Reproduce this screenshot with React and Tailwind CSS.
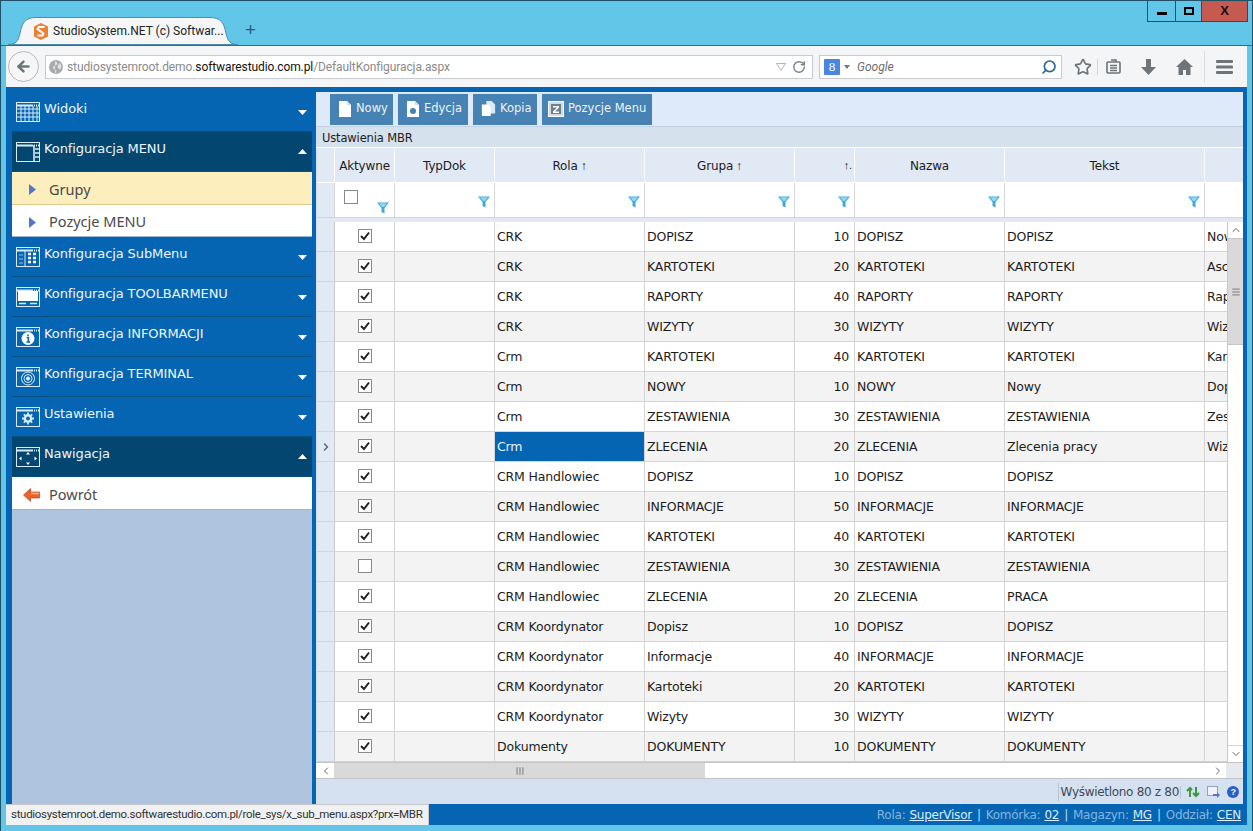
import {
  ArrowLeft,
  ChevronDown,
  ChevronLeft,
  ChevronRight,
  ChevronUp,
  Menu,
  RotateCw,
  Search,
  Star,
} from "lucide-react";

const UI_FONT = "font-['Roboto','Noto_Sans',sans-serif]";
const GRID_COLS = "grid grid-cols-[18px_60px_100px_150px_150px_60px_150px_200px_1fr]";

const rows = [
  [true, "CRK", "DOPISZ", 10, "DOPISZ", "DOPISZ", "Nowy"],
  [true, "CRK", "KARTOTEKI", 20, "KARTOTEKI", "KARTOTEKI", "Asc"],
  [true, "CRK", "RAPORTY", 40, "RAPORTY", "RAPORTY", "Raporty"],
  [true, "CRK", "WIZYTY", 30, "WIZYTY", "WIZYTY", "Wizyty"],
  [true, "Crm", "KARTOTEKI", 40, "KARTOTEKI", "KARTOTEKI", "Kartoteki"],
  [true, "Crm", "NOWY", 10, "NOWY", "Nowy", "Dopisz"],
  [true, "Crm", "ZESTAWIENIA", 30, "ZESTAWIENIA", "ZESTAWIENIA", "Zestawienia"],
  [true, "Crm", "ZLECENIA", 20, "ZLECENIA", "Zlecenia pracy", "Wizyty"],
  [true, "CRM Handlowiec", "DOPISZ", 10, "DOPISZ", "DOPISZ", ""],
  [true, "CRM Handlowiec", "INFORMACJE", 50, "INFORMACJE", "INFORMACJE", ""],
  [true, "CRM Handlowiec", "KARTOTEKI", 40, "KARTOTEKI", "KARTOTEKI", ""],
  [false, "CRM Handlowiec", "ZESTAWIENIA", 30, "ZESTAWIENIA", "ZESTAWIENIA", ""],
  [true, "CRM Handlowiec", "ZLECENIA", 20, "ZLECENIA", "PRACA", ""],
  [true, "CRM Koordynator", "Dopisz", 10, "DOPISZ", "DOPISZ", ""],
  [true, "CRM Koordynator", "Informacje", 40, "INFORMACJE", "INFORMACJE", ""],
  [true, "CRM Koordynator", "Kartoteki", 20, "KARTOTEKI", "KARTOTEKI", ""],
  [true, "CRM Koordynator", "Wizyty", 30, "WIZYTY", "WIZYTY", ""],
  [true, "Dokumenty", "DOKUMENTY", 10, "DOKUMENTY", "DOKUMENTY", ""],
];

function WinIcon({ children }) {
  return (
    <svg width="24" height="20" viewBox="0 0 24 20" className="shrink-0" fill="none" stroke="#d8ecf8">
      <rect x="0.5" y="0.5" width="23" height="19" />
      <path d="M1 3.5h22" strokeWidth="2" strokeDasharray="16 1 1 1 1 1 1" />
      {children}
    </svg>
  );
}

const menuIcons = {
  grid: (
    <path d="M1 7h22M1 11h22M1 15h22M5 4v15M9 4v15M13 4v15M17 4v15M21 4v15" strokeWidth="1" />
  ),
  menu: (
    <path d="M18 3v16M19 7h4M19 11h4M19 15h4" strokeWidth="1.6" />
  ),
  sub: (
    <g>
      <path d="M9 3v16" />
      <path d="M3 8h4M3 12h4M3 16h4" stroke="#8fbfe0" />
      <path d="M12 7h3M17 7h3M12 11h3M17 11h3M12 15h3M17 15h3" strokeWidth="2.4" stroke="#fff" />
    </g>
  ),
  toolbar: (
    <g>
      <rect x="2" y="4" width="20" height="10" fill="#fff" stroke="none" />
      <path d="M3 16.5h7M14 16.5h7" strokeWidth="1.6" />
    </g>
  ),
  info: (
    <g>
      <circle cx="12" cy="11.5" r="6.5" fill="#fff" stroke="none" />
      <path d="M12 7.5v1.6M10.6 10.5H12.4V15M10.5 15h3.6" stroke="#0565b2" strokeWidth="1.6" />
    </g>
  ),
  target: (
    <g>
      <circle cx="12" cy="11.5" r="6.5" />
      <circle cx="12" cy="11.5" r="4" />
      <circle cx="12" cy="11.5" r="1.6" fill="#fff" />
    </g>
  ),
  gear: (
    <g>
      <circle cx="12" cy="11.5" r="4.4" fill="#d8ecf8" stroke="none" />
      <circle cx="12" cy="11.5" r="1.9" fill="#0565b2" stroke="none" />
      <path d="M12 5.5v12M6 11.5h12M7.8 7.3l8.4 8.4M16.2 7.3l-8.4 8.4" strokeWidth="1.8" strokeDasharray="2 8 2" />
    </g>
  ),
  nav: (
    <g fill="#fff" stroke="none">
      <path d="M12 5l2 2.5h-4zM12 18l2-2.5h-4zM3 11.5L5.5 9.5v4zM21 11.5l-2.5-2v4z" />
    </g>
  ),
};

function MenuHeader({ label, icon, open }) {
  return (
    <div
      className={`h-[40px] flex pl-[4px] pr-[4px] pt-[8px] border-b border-[#0a4f84] ${
        open ? "bg-[#03466f]" : "bg-[#0565b2]"
      }`}
    >
      <div className="pt-[2px]">
        <WinIcon>{menuIcons[icon]}</WinIcon>
      </div>
      <span className="ml-[4px] h-[18px] text-[13px] leading-[18px] text-[#eef6fc] font-['DejaVu_Sans',sans-serif] tracking-[-0.1px] flex-1 whitespace-nowrap">
        {label}
      </span>
      <div className={`self-start mr-[1px] ${open ? "mt-[9px]" : "mt-[10px]"}`}>
        <svg width="9" height="5" viewBox="0 0 9 5" className="block">
          <path d={open ? "M4.5 0L9 5H0z" : "M0 0h9L4.5 5z"} fill="#fff" />
        </svg>
      </div>
    </div>
  );
}

function MenuItem({ label, active, icon, height = "h-[33px]" }) {
  return (
    <div
      className={`${height} flex items-center pt-[3px] text-[14.5px] text-[#4a4a4a] font-['Noto_Sans',sans-serif] border-b ${
        active ? "bg-[#fdeebd] border-[#e0c88e]" : "bg-white border-[#9fb4cf]"
      }`}
    >
      <span className="w-[37px] flex justify-center shrink-0">
        {icon === "back" ? (
          <svg width="17" height="14" viewBox="0 0 17 14" className="ml-[1px]">
            <path d="M7.5 0.5L0.5 7l7 6.5V10H16.5V4H7.5z" fill="#e8642c" stroke="#b9461b" strokeWidth="0.7" />
            <path d="M8 4.6h8v1.6H8z" fill="#f5b08e" />
          </svg>
        ) : (
          <svg width="7" height="11" viewBox="0 0 7 11" className="ml-[3px]">
            <path d="M0 0l7 5.5L0 11z" fill="#4f78c9" />
          </svg>
        )}
      </span>
      {label}
    </div>
  );
}

function ToolButton({ label, width, children }) {
  return (
    <button
      type="button"
      className={`h-[31px] ${width} bg-[#4682b4] flex items-center pl-[8px] gap-[4px] text-[11.5px] text-[#eef4fa] font-['DejaVu_Sans',sans-serif] whitespace-nowrap`}
    >
      {children}
      {label}
    </button>
  );
}

function PageIcon({ children }) {
  return (
    <svg width="14" height="18" viewBox="0 0 14 18" className="shrink-0">
      <path d="M1 1h8l4 4v12H1z" fill="#fff" />
      <path d="M9 1v4h4z" fill="#cfdcea" />
      {children}
    </svg>
  );
}

function Filter({ className = "" }) {
  return (
    <svg width="12" height="12" viewBox="0 0 12 12" className={className}>
      <path d="M0 0.5h12L7.5 6v5.5L4.5 10V6z" fill="#3fa9d8" />
      <path d="M2 1.2h8L7 5H5z" fill="#8fd6f2" />
    </svg>
  );
}

function Checkbox({ checked }) {
  return (
    <svg width="14" height="14" viewBox="0 0 14 14" className="block">
      <rect x="0.5" y="0.5" width="13" height="13" fill="#fff" stroke="#8a8a8a" />
      {checked && <path d="M3 7l3 3 5-6.5" fill="none" stroke="#222" strokeWidth="2" />}
    </svg>
  );
}

function HeaderCell({ label, sort }) {
  return (
    <div className="border-r border-[#fff] flex items-center justify-center pt-[2px]">
      {label}
      {sort && <span className="ml-[3px] text-[12px] font-['Liberation_Sans',sans-serif]">↑</span>}
    </div>
  );
}

function FilterCell() {
  return (
    <div className="border-r border-[#d8d8d8] flex justify-end items-start pt-[13px] pr-[4px]">
      <Filter />
    </div>
  );
}

function DataRow({ row, index }) {
  const [checked, rola, grupa, num, nazwa, tekst, extra] = row;
  const selected = index === 7;
  const cell = "border-r border-[#d4d4d4] px-[2px] pt-[2px] flex items-center whitespace-nowrap overflow-hidden";
  return (
    <div
      className={`${GRID_COLS} h-[30px] border-b border-[#d4d4d4] ${
        index % 2 === 1 ? "bg-[#f3f3f3]" : "bg-white"
      }`}
    >
      <div className="bg-[#e1e9f5] border-r border-[#c9c9c9] flex items-center justify-center">
        {selected && <ChevronRight size={12} strokeWidth={3} color="#666" />}
      </div>
      <div className="border-r border-[#d4d4d4] pb-[2px] flex items-center justify-center">
        <Checkbox checked={checked} />
      </div>
      <div className={cell} />
      <div className={`${cell} ${selected ? "bg-[#0565b2] text-[#e8f4fc]" : ""}`}>{rola}</div>
      <div className={cell}>{grupa}</div>
      <div className={`${cell} justify-end pr-[5px]`}>{num}</div>
      <div className={cell}>{nazwa}</div>
      <div className={cell}>{tekst}</div>
      <div className="px-[2px] pt-[2px] flex items-center overflow-hidden whitespace-nowrap">{extra}</div>
    </div>
  );
}

function Browser() {
  return (
    <>
      <div className="h-[45px] flex justify-between shrink-0 border-b border-[#2b6d8f]">
        <div className="flex items-end pl-[7px]">
          <div className="relative w-[232px] h-[28px] flex items-center pl-[26px] text-[12px] text-[#222]">
            <svg width="232" height="28" viewBox="0 0 232 28" className="absolute inset-0">
              <path
                d="M0 27.5c8 0 10-3 12-11C14 6 17 .5 28 .5h174c11 0 14 5.5 16 16 2 8 4 11 12 11z"
                fill="#f5f6f7"
                stroke="#4d8cab"
              />
            </svg>
            <svg width="14" height="17" viewBox="0 0 14 17" className="relative mr-[5px]">
              <path d="M7 0l7 3.5v10L7 17l-7-3.5v-10z" fill="#ee7f35" />
              <path d="M10.5 4H5L3.5 6 9.5 10.5 8.5 12.5H3.5" fill="none" stroke="#fff" strokeWidth="2" />
            </svg>
            <span className={`relative whitespace-nowrap ${UI_FONT}`}>StudioSystem.NET (c) Softwar...</span>
          </div>
          <span className="ml-[5px] mb-[6px] text-[19px] leading-[19px] text-[#2f5d78] font-['Liberation_Sans',sans-serif]">+</span>
        </div>
        <div className="flex h-[21px] mr-[4px] border border-t-0 border-[#1f5068] font-['Liberation_Sans',sans-serif] text-[#111]">
          <div className="w-[28px] border-r border-[#1f5068] flex items-center justify-center pt-[5px]">
            <div className="w-[10px] h-[3px] bg-black" />
          </div>
          <div className="w-[26px] border-r border-[#1f5068] flex items-center justify-center">
            <div className="w-[10px] h-[8px] border-2 border-black" />
          </div>
          <div className="w-[45px] bg-[#c75a50] flex items-center justify-center text-[13px] font-bold">X</div>
        </div>
      </div>

      <div className={`h-[41px] shrink-0 mx-[5px] bg-[#f4f5f6] flex items-center relative ${UI_FONT}`}>
        <div className="ml-[39px] w-[768px] h-[24px] bg-white border border-[#c8cbcf] flex items-center pl-[2px] pr-[6px]">
          <svg width="14" height="14" viewBox="0 0 14 14" className="shrink-0 ml-[1px]">
            <circle cx="7" cy="7" r="7" fill="#a8abae" />
            <path d="M6 1C8 2 9 3 8 4.500S5 5 4 7s2 2 3 3 0 3-1 3.500M11 3c1 2 2 3 1 5s-2 1-3 0 0-4 2-5z" fill="#dfe1e3" />
          </svg>
          <span className="ml-[4px] text-[12px] tracking-[-0.1px] text-[#8a8a8a] whitespace-nowrap">
            studiosystemroot.demo.<span className="text-[#111]">softwarestudio.com.pl</span>/DefaultKonfiguracja.aspx
          </span>
          <span className="ml-auto flex items-center gap-[6px]">
            <svg width="10" height="8" viewBox="0 0 10 8">
              <path d="M0.5 0.5h9L5 7.5z" fill="none" stroke="#b5b5b5" />
            </svg>
            <RotateCw size={14} color="#7b8288" strokeWidth={2.5} />
          </span>
        </div>
        <div className="absolute left-[2px] top-[5px] w-[31px] h-[31px] rounded-full bg-[#f6f6f6] border border-[#b8bbbe] flex items-center justify-center">
          <ArrowLeft size={17} color="#6f7479" strokeWidth={3.5} />
        </div>
        <div className="ml-[6px] w-[243px] h-[24px] bg-white border border-[#c8cbcf] flex items-center pl-[4px] pr-[4px]">
          <div className="w-[16px] h-[16px] bg-[#4a86e0] rounded-[1px] text-white text-[13px] leading-[16px] text-center font-['Liberation_Serif',serif]">
            8
          </div>
          <svg width="6" height="4" viewBox="0 0 6 4" className="ml-[4px]">
            <path d="M0 0h6L3 4z" fill="#777" />
          </svg>
          <span className="ml-[7px] text-[12px] italic text-[#6f6f6f]">Google</span>
          <Search size={16} color="#2a6596" strokeWidth={2.5} className="ml-auto -scale-x-100" />
        </div>
        <div className="ml-[12px] flex items-center text-[#6f7479]">
          <Star size={18} strokeWidth={2.2} />
          <div className="ml-[5px] h-[16px] w-px bg-[#d4d6d8]" />
          <svg width="15" height="15" viewBox="0 0 15 15" className="ml-[8px]" fill="none" stroke="#6f7479" strokeWidth="1.6">
            <rect x="1" y="3" width="13" height="11" rx="1" />
            <path d="M5 1h5v2M4 6.500h7M4 9h7M4 11.500h7" />
          </svg>
          <svg width="15" height="16" viewBox="0 0 15 16" className="ml-[20px]" fill="#6f7479">
            <path d="M5 0h5v8h5l-7.500 8L0 8h5z" />
          </svg>
          <svg width="17" height="16" viewBox="0 0 17 16" className="ml-[20px]" fill="#6f7479">
            <path d="M8.500 0L17 8h-2.500v8H10v-5H7v5H2.500V8H0z" />
          </svg>
          <div className="ml-[11px] h-[32px] w-px bg-[#dcdee0]" />
          <svg width="17" height="14" viewBox="0 0 17 14" className="ml-[11px]" fill="#6f7479">
            <rect width="17" height="3" rx="1" />
            <rect y="5.500" width="17" height="3" rx="1" />
            <rect y="11" width="17" height="3" rx="1" />
          </svg>
        </div>
      </div>
    </>
  );
}

function Sidebar() {
  return (
    <div className="w-[310px] shrink-0 bg-[#afc4de] border-l-[6px] border-r-[4px] border-[#0565b2] flex flex-col">
      <div className="h-[5px] bg-[#0565b2] shrink-0" />
      <MenuHeader label="Widoki" icon="grid" />
      <MenuHeader label="Konfiguracja MENU" icon="menu" open />
      <MenuItem label="Grupy" active />
      <MenuItem label="Pozycje MENU" height="h-[32px]" />
      <MenuHeader label="Konfiguracja SubMenu" icon="sub" />
      <MenuHeader label="Konfiguracja TOOLBARMENU" icon="toolbar" />
      <MenuHeader label="Konfiguracja INFORMACJI" icon="info" />
      <MenuHeader label="Konfiguracja TERMINAL" icon="target" />
      <MenuHeader label="Ustawienia" icon="gear" />
      <MenuHeader label="Nawigacja" icon="nav" open />
      <MenuItem label="Powrót" icon="back" />
    </div>
  );
}

function Grid() {
  return (
    <div className="flex-1 min-h-0 flex flex-col bg-[#d5e1f1] text-[12.5px] text-[#1c1c1c] font-['DejaVu_Sans',sans-serif] tracking-[-0.15px]">
      <div className="h-[35px] shrink-0 bg-[#deeafa] flex items-center pl-[14px] gap-[5px] border-b border-[#c3d0e0] tracking-normal">
        <ToolButton label="Nowy" width="w-[63px]">
          <PageIcon />
        </ToolButton>
        <ToolButton label="Edycja" width="w-[70px]">
          <PageIcon>
            <circle cx="7" cy="11" r="3" fill="#4682b4" />
          </PageIcon>
        </ToolButton>
        <ToolButton label="Kopia" width="w-[64px]">
          <svg width="15" height="18" viewBox="0 0 17 18" className="shrink-0">
            <path d="M6 0h6l4 4v10H6z" fill="#dfe9f3" />
            <path d="M1 4h7l3 3v10H1z" fill="#fff" />
          </svg>
        </ToolButton>
        <ToolButton label="Pozycje Menu" width="w-[110px]">
          <svg width="16" height="16" viewBox="0 0 16 16" className="shrink-0 -ml-[2px]">
            <rect x="0.5" y="0.5" width="15" height="15" fill="#cfdcea" stroke="#fff" />
            <rect x="3" y="3" width="10" height="10" fill="#6d7f91" />
            <path d="M5 5h6v1.400L7 10.500h4V12H5v-1.400L9 6.500H5z" fill="#fff" />
          </svg>
        </ToolButton>
      </div>
      <div className="h-[21px] shrink-0 bg-[#d6e1ee] pl-[6px] pt-[3px] flex items-center border-b border-white text-[11.5px]">
        Ustawienia MBR
      </div>

      <div className="pl-px">
        <div className={`${GRID_COLS} h-[35px] bg-[#e1e9f5] border-b border-white text-[12px]`}>
          <HeaderCell />
          <HeaderCell label="Aktywne" />
          <HeaderCell label="TypDok" />
          <HeaderCell label="Rola" sort />
          <HeaderCell label="Grupa" sort />
          <div className="border-r border-white flex items-center justify-end pr-[2px] text-[11px] font-['Liberation_Sans',sans-serif]">↑.</div>
          <HeaderCell label="Nazwa" />
          <HeaderCell label="Tekst" />
          <div />
        </div>
        <div className={`${GRID_COLS} h-[35px] bg-white border-b border-[#d4d4d4]`}>
          <div className="bg-[#e1e9f5] border-r border-[#d8d8d8]" />
          <div className="relative border-r border-[#d8d8d8] pl-[9px] pt-[7px]">
            <Checkbox />
            <Filter className="absolute right-[5px] top-[19px]" />
          </div>
          <FilterCell />
          <FilterCell />
          <FilterCell />
          <FilterCell />
          <FilterCell />
          <FilterCell />
          <div />
        </div>
        <div className="h-[4px] bg-[#e1e9f5]" />
      </div>

      <div className="h-[540px] shrink-0 flex pl-px overflow-hidden">
        <div className="w-[910px] shrink-0 overflow-hidden">
          {rows.map((row, i) => (
            <DataRow key={i} row={row} index={i} />
          ))}
        </div>
        <div className="w-[16px] shrink-0 bg-white border-l border-[#c9c9c9] flex flex-col">
          <div className="h-[16px] flex items-center justify-center">
            <ChevronUp size={12} color="#666" />
          </div>
          <div className="h-[107px] bg-[#d9d9d9] border-y border-[#c4c4c4] flex items-center justify-center">
            <Menu size={10} color="#666" strokeWidth={2} />
          </div>
          <div className="flex-1" />
          <div className="h-[17px] flex items-center justify-center border-t border-[#d4d4d4]">
            <ChevronDown size={12} color="#666" />
          </div>
        </div>
      </div>

      <div className="h-[17px] shrink-0 flex pl-px bg-white border-y border-[#c4c4c4]">
        <div className="w-[17px] flex items-center justify-center">
          <ChevronLeft size={12} color="#666" />
        </div>
        <div className="w-[371px] bg-[#d9d9d9] flex items-center justify-center">
          <Menu size={10} color="#666" strokeWidth={2} className="rotate-90" />
        </div>
        <div className="flex-1" />
        <div className="w-[17px] flex items-center justify-center">
          <ChevronRight size={12} color="#666" />
        </div>
        <div className="w-[17px] bg-[#e6e9ee]" />
      </div>

      <div className="flex-1 flex items-center justify-end text-[12px] text-[#3c4a57] pr-[4px] tracking-[-0.3px]">
        <span className="border-l border-[#b5c2d2] pl-[2px] whitespace-nowrap">Wyświetlono 80 z 80</span>
        <span className="border-l border-[#b5c2d2] ml-[1px] pl-[5px] flex items-center gap-[7px]">
          <svg width="14" height="12" viewBox="0 0 14 12" fill="none" stroke="#3c9a3c" strokeWidth="2">
            <path d="M4 11V3M1 5l3-3 2 2M10 1v8M7 7l3 3 3-3" />
          </svg>
          <svg width="13" height="12" viewBox="0 0 13 12">
            <rect x="0.5" y="0.5" width="10" height="9" fill="#f0f4f9" stroke="#8fa3bb" />
            <path d="M6 8h4V6l3 3-3 3v-2H6z" fill="#4f78c9" />
          </svg>
          <span className="w-[12px] h-[12px] rounded-full bg-[#2a5fc4] text-white text-[9px] leading-[12px] text-center font-bold font-['Liberation_Sans',sans-serif]">
            ?
          </span>
        </span>
      </div>
    </div>
  );
}

function StatusBar() {
  const val = "text-[#d9ecfa] underline ml-[4px]";
  const sep = "mx-[5px] text-[#c5ddf0]";
  return (
    <div className="h-[21px] shrink-0 bg-[#0565b2] relative flex items-center justify-end pr-[6px] text-[12px] text-[#86b4dc] font-['DejaVu_Sans',sans-serif] tracking-[-0.25px] whitespace-nowrap">
      <div className="absolute left-0 top-0 w-[423px] h-[21px] bg-[#f0f1f2] border-t border-r border-[#c8c8c8] pl-[5px] flex items-center text-[11.5px] text-[#333] font-['Roboto','Noto_Sans',sans-serif] tracking-[-0.3px]">
        studiosystemroot.demo.softwarestudio.com.pl/role_sys/x_sub_menu.aspx?prx=MBR
      </div>
      Rola:<span className={val}>SuperVisor</span>
      <span className={sep}>|</span>
      Komórka:<span className={val}>02</span>
      <span className={sep}>|</span>
      Magazyn:<span className={val}>MG</span>
      <span className={sep}>|</span>
      Oddział:<span className={val}>CEN</span>
    </div>
  );
}

export default function App() {
  return (
    <div className="w-[1253px] h-[831px] bg-[#62c6e9] border-t border-x border-[#1f5068] flex flex-col overflow-hidden">
      <Browser />
      <div className="mx-[5px] flex-1 min-h-0 flex flex-col mb-[6px]">
        <div className="flex-1 min-h-0 flex">
          <Sidebar />
          <div className="flex-1 min-w-0 flex flex-col bg-[#0565b2] pt-[5px] pr-[4px]">
            <Grid />
          </div>
        </div>
        <StatusBar />
      </div>
    </div>
  );
}
